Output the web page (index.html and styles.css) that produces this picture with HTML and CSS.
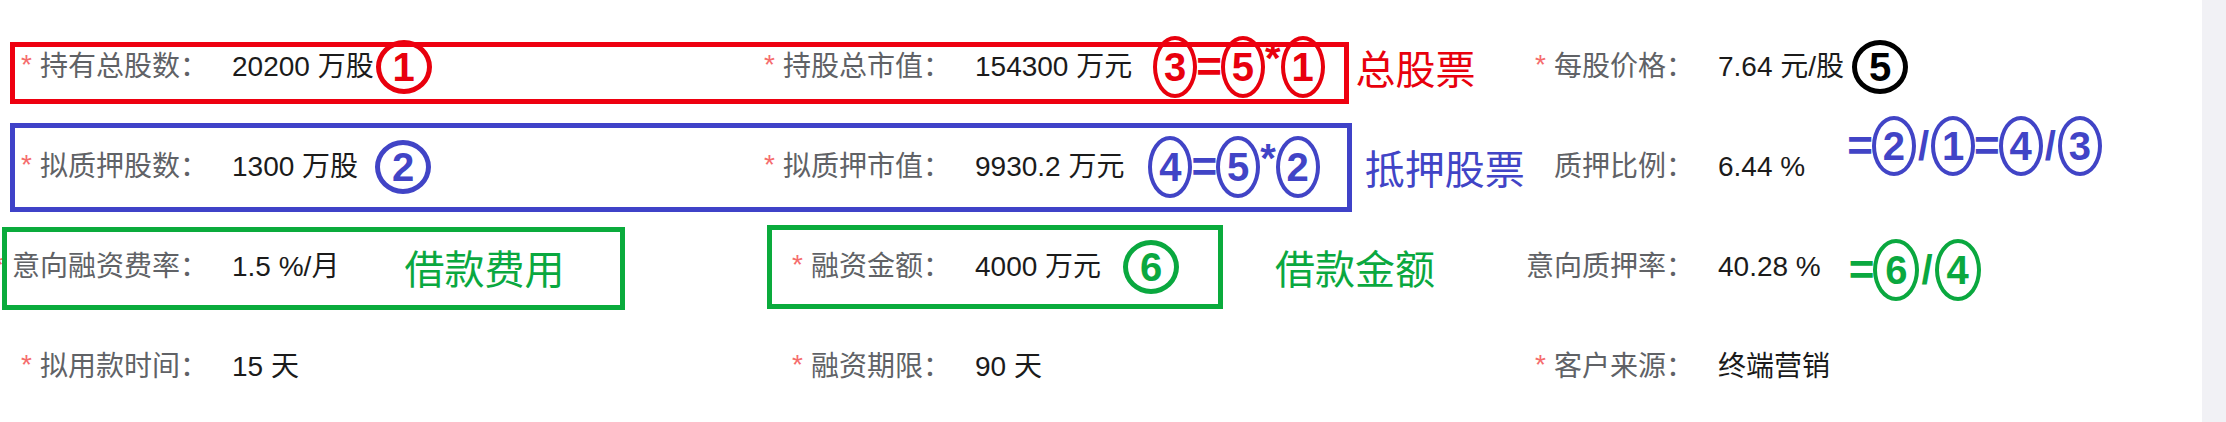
FILE: index.html
```html
<!DOCTYPE html>
<html lang="zh-CN">
<head>
<meta charset="utf-8">
<title>质押融资表单</title>
<link rel="stylesheet" href="styles.css">
</head>
<body>
<div class="page">
  <main class="form">
    <div class="item req">
      <div class="lbl"><span class="txt">持有总股数：</span></div>
      <div class="val"><span>20200 万股</span><span class="circ red big c-r1">1</span></div>
    </div>
    <div class="item req">
      <div class="lbl"><span class="txt">持股总市值：</span></div>
      <div class="val"><span>154300 万元</span><span class="formula red f-r1"><span class="circ">3</span><span class="op eq">=</span><span class="circ">5</span><span class="op star">*</span><span class="circ">1</span></span><span class="note red n-total">总股票</span></div>
    </div>
    <div class="item req">
      <div class="lbl"><span class="txt">每股价格：</span></div>
      <div class="val"><span>7.64 元/股</span><span class="circ black big c-r1b">5</span></div>
    </div>

    <div class="item req">
      <div class="lbl"><span class="txt">拟质押股数：</span></div>
      <div class="val"><span>1300 万股</span><span class="circ blue big c-r2">2</span></div>
    </div>
    <div class="item req">
      <div class="lbl"><span class="txt">拟质押市值：</span></div>
      <div class="val"><span>9930.2 万元</span><span class="formula blue f-r2"><span class="circ">4</span><span class="op eq">=</span><span class="circ">5</span><span class="op star">*</span><span class="circ">2</span></span><span class="note blue n-pledge">抵押股票</span></div>
    </div>
    <div class="item">
      <div class="lbl"><span class="txt">质押比例：</span></div>
      <div class="val"><span>6.44 %</span><span class="formula blue f-ratio"><span class="op eq">=</span><span class="circ">2</span><span class="op sl">/</span><span class="circ">1</span><span class="op eq">=</span><span class="circ">4</span><span class="op sl">/</span><span class="circ">3</span></span></div>
    </div>

    <div class="item req">
      <div class="lbl"><span class="txt">意向融资费率：</span></div>
      <div class="val"><span>1.5 %/月</span><span class="note green n-fee">借款费用</span></div>
    </div>
    <div class="item req">
      <div class="lbl"><span class="txt">融资金额：</span></div>
      <div class="val"><span>4000 万元</span><span class="circ green big c-r3">6</span><span class="note green n-loan">借款金额</span></div>
    </div>
    <div class="item">
      <div class="lbl"><span class="txt">意向质押率：</span></div>
      <div class="val"><span>40.28 %</span><span class="formula green f-rate"><span class="op eq">=</span><span class="circ">6</span><span class="op sl">/</span><span class="circ">4</span></span></div>
    </div>

    <div class="item req">
      <div class="lbl"><span class="txt">拟用款时间：</span></div>
      <div class="val"><span>15 天</span></div>
    </div>
    <div class="item req">
      <div class="lbl"><span class="txt">融资期限：</span></div>
      <div class="val"><span>90 天</span></div>
    </div>
    <div class="item req">
      <div class="lbl"><span class="txt">客户来源：</span></div>
      <div class="val"><span>终端营销</span></div>
    </div>

    <div class="box box-red"></div>
    <div class="box box-blue"></div>
    <div class="box box-green1"></div>
    <div class="box box-green2"></div>
  </main>
  <div class="track"></div>
</div>
</body>
</html>
```

FILE: styles.css
```css
html, body {
  margin: 0;
  padding: 0;
  background: #ffffff;
}

body {
  font-family: "Liberation Sans", "Noto Sans CJK SC", sans-serif;
  overflow: hidden;
}

.page {
  display: flex;
  width: 2226px;
  height: 422px;
  overflow: hidden;
}

.form {
  position: relative;
  flex: 1;
  display: grid;
  grid-template-columns: repeat(3, 743px);
  grid-auto-rows: 100px;
  align-content: start;
  padding: 17px 0 0 8px;
  overflow: hidden;
}

.track {
  width: 24px;
  background: #f1f1f5;
}

.item {
  display: grid;
  grid-template-columns: 224px 1fr;
  align-items: center;
  height: 100px;
}

.lbl {
  display: flex;
  justify-content: flex-end;
  align-items: center;
  padding-right: 24px;
  white-space: nowrap;
  font-size: 28px;
  color: #606266;
  line-height: 40px;
}

.req .lbl::before {
  content: "*";
  color: #f56c6c;
  margin-right: 8px;
  align-self: flex-start;
  line-height: 36px;
}

.val {
  display: flex;
  align-items: center;
  white-space: nowrap;
  font-size: 28px;
  color: #1b1b1b;
  line-height: 40px;
}

/* annotations */
.red { color: #e8000d; }
.blue { color: #4144c6; }
.green { color: #0aa83f; }
.black { color: #000000; }

.circ {
  display: inline-flex;
  align-items: center;
  justify-content: center;
  box-sizing: border-box;
  width: 44px;
  height: 62px;
  border: 4px solid currentColor;
  border-radius: 50%;
  font-family: "Liberation Sans", sans-serif;
  font-weight: bold;
  font-size: 40px;
  line-height: 1;
}

.circ.big {
  width: 56px;
  height: 54px;
  border-width: 5px;
  font-size: 40px;
}

.c-r1 { margin-left: 2px; height: 52px; width: 56px; }
.c-r1b { margin-left: 8px; width: 50px; height: 62px; }
.c-r2 { margin-left: 17px; }
.c-r3 { margin-left: 22px; }

.formula {
  display: inline-flex;
  align-items: center;
}

.op {
  font-family: "Liberation Sans", sans-serif;
  font-weight: bold;
  font-size: 44px;
  line-height: 1;
}

.op.eq { margin: 0 -1px; }
.op.star { font-size: 40px; align-self: flex-start; margin-top: 2px; }
.op.sl { font-size: 40px; margin: 0 2px; }

.f-r1 { margin-left: 21px; }
.f-r2 { margin-left: 24px; }
.f-ratio { margin-left: 43px; position: relative; top: -21px; }
.f-ratio .circ { height: 60px; }
.f-rate { margin-left: 29px; position: relative; top: 3px; }
.f-rate .circ { width: 46px; }

.note {
  font-family: "Noto Sans CJK SC", sans-serif;
  font-size: 40px;
  line-height: 1;
}

.n-total { margin-left: 31px; }
.n-pledge { margin-left: 45px; }
.n-fee { margin-left: 65px; }
.n-loan { margin-left: 96px; }

.box {
  position: absolute;
  box-sizing: border-box;
  border: 5px solid;
  pointer-events: none;
}

.box-red {
  left: 10px;
  top: 42px;
  width: 1339px;
  height: 62px;
  border-color: #ee0010;
}

.box-blue {
  left: 10px;
  top: 123px;
  width: 1342px;
  height: 89px;
  border-color: #3f42c8;
}

.box-green1 {
  left: 2px;
  top: 227px;
  width: 623px;
  height: 83px;
  border-color: #0aab3c;
}

.box-green2 {
  left: 767px;
  top: 225px;
  width: 456px;
  height: 84px;
  border-color: #0aab3c;
}
```
